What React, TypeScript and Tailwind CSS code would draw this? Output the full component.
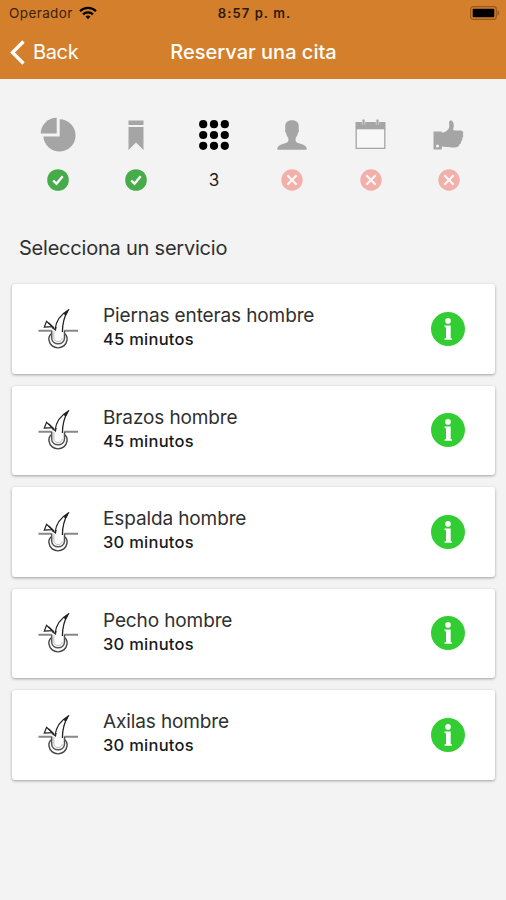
import React from 'react';

type StepStatus = 'done' | 'current' | 'pending';

interface Step {
  id: string;
  icon: React.ReactNode;
  status: StepStatus;
}

interface Service {
  name: string;
  minutes: number;
}

const PieIcon = () => (
  <svg width="36" height="36" viewBox="0 0 36 36" fill="#a5a5a5">
    <path d="M19.700 2.300a16.100 16.100 0 1 1-16.300 17.200h16.300z" />
    <path d="M16.700.8v15.800H.7A16 16 0 0 1 16.700.8z" />
  </svg>
);

const BookmarkIcon = () => (
  <svg width="16" height="30" viewBox="0 0 16 30" fill="#a5a5a5">
    <path d="M.5.5h15v4.500h-15zM.5 7h15v23L8 22.500.5 30z" />
  </svg>
);

const GridIcon = () => (
  <svg width="30" height="30" viewBox="0 0 30 30" fill="#000">
    {[4.2, 15, 25.8].map(y => [4.2, 15, 25.8].map(x => (
      <circle key={`${x}-${y}`} cx={x} cy={y} r="4.1" />
    )))}
  </svg>
);

const PersonIcon = () => (
  <svg width="30" height="30" viewBox="0 0 30 30" fill="#a5a5a5">
    <path d="M15 .2c4.400 0 7 2.300 6.800 6.500 0 1.100-.2 2-.2 2.700.7.300.5 2.500-.7 3.800-.5 2.200-1.300 3.700-2.300 4.700v2.800c.8 2.300 4.500 2.700 7.200 3.900 2.800 1.200 3.900 2.400 4 5.200H.2c.1-2.800 1.200-4 4-5.200 2.700-1.200 6.400-1.600 7.200-3.900v-2.800c-1-1-1.800-2.500-2.300-4.700C7.900 11.900 7.700 9.700 8.400 9.400c0-.7-.2-1.600-.2-2.700C8 2.500 10.600.2 15 .2z" />
  </svg>
);

const CalendarIcon = () => (
  <svg width="31" height="31" viewBox="0 0 31 31">
    <path d="M1.200 10v19.300h28.600V10" fill="#f7f7f7" stroke="#a5a5a5" strokeWidth="1.300" />
    <path d="M.5 3h30v7.300H.5z" fill="#a5a5a5" />
    <path d="M8.500.8v5M22.500.8v5" stroke="#dedede" strokeWidth="3.400" />
    <path d="M8.500 .5v6M22.500 .5v6" stroke="#a5a5a5" strokeWidth="1.900" />
  </svg>
);

const ThumbIcon = () => (
  <svg width="31" height="30" viewBox="0 0 31 30">
    <path
      d="M.5 11.500h8.300v1.300c4-.4 7.300-3.400 7.500-6.300 0-2.300-.6-5.500 1-6 2.500-.5 3.600 2.500 3.500 5.300-.1 2.100-.9 3.600-.5 4.200 2.300 1 7.500-.1 9.200 1.200 1.200 1 .8 2.500.2 3.100 1 1.200.7 2.900-.5 3.700.5 1.400 0 2.700-1.200 3.400.2 1.500-.5 2.700-1.800 3.200-.3 1.800-1.300 2.500-3 2.700-3.900.6-9.400 0-14.400-.7v3H.5z"
      fill="#a5a5a5"
    />
    <circle cx="4.500" cy="26" r="1.600" fill="#f3f3f3" />
  </svg>
);

const DoneBadge = () => (
  <svg width="22" height="22" viewBox="0 0 22 22">
    <circle cx="11" cy="11" r="10.800" fill="#45ac49" />
    <path d="M6.200 11.500l3.300 3.200 6.200-7.400" fill="none" stroke="#fff" strokeWidth="2.400" />
  </svg>
);

const PendingBadge = () => (
  <svg width="22" height="22" viewBox="0 0 22 22">
    <circle cx="11" cy="11" r="10.700" fill="#f2b0ab" />
    <path d="M6.300 6.300l9.400 9.400M15.700 6.300l-9.400 9.400" stroke="#faf6f6" strokeWidth="2.200" />
  </svg>
);

const FollicleIcon = () => (
  <svg width="40" height="40" viewBox="0 0 40 40" fill="none" stroke="#222">
    {/* skin line */}
    <path d="M.5 21.800h13M26.500 21.800h13.500" stroke="#888" strokeWidth="1.900" />
    {/* bulb */}
    <path d="M13.500 24.500c-2.100 1.700-2.900 4-2.500 6.600 1.500 10.300 16.500 10.300 18 0 .4-2.600-.4-4.900-2.500-6.600" stroke="#444" strokeWidth="1.400" />
    <path d="M13.700 21.500v7.800c.4 7.300 12.400 7.300 12.800 0v-7.800" stroke="#555" strokeWidth="1.500" />
    <path d="M15.900 22v7c.3 4.700 8.100 4.700 8.400 0" stroke="#aaa" strokeWidth=".8" />
    {/* hair */}
    <path d="M17 20.500C18 12.500 23 5.300 30 1.300c-3.600 6-5.600 13-5.600 21.700" strokeWidth="1.300" />
    <path d="M30.300.8l-4.200 4.300 2 .5z" fill="#222" />
    <path d="M8.600 12.300l-2.300 5.700 7.800-.4z" strokeWidth="1.200" />
    <path d="M10.500 13.700l5.500 5.300M14 18.500l3.500 2.500.6-3" strokeWidth="1.200" />
  </svg>
);

const InfoIcon = () => (
  <svg width="34" height="34" viewBox="0 0 34 34">
    <circle cx="17" cy="17" r="17" fill="#32cd32" />
    <g fill="#fff">
      <circle cx="17" cy="8.900" r="2.800" />
      <path d="M13.500 13.500h6.200v12.500l1.300.6v1.200h-7.500v-1.200l1.500-.6V15.400l-1.500-.6z" />
    </g>
  </svg>
);

const steps: Step[] = [
  { id: 'zone', icon: <PieIcon />, status: 'done' },
  { id: 'category', icon: <BookmarkIcon />, status: 'done' },
  { id: 'service', icon: <GridIcon />, status: 'current' },
  { id: 'staff', icon: <PersonIcon />, status: 'pending' },
  { id: 'date', icon: <CalendarIcon />, status: 'pending' },
  { id: 'confirm', icon: <ThumbIcon />, status: 'pending' },
];

const services: Service[] = [
  { name: 'Piernas enteras hombre', minutes: 45 },
  { name: 'Brazos hombre', minutes: 45 },
  { name: 'Espalda hombre', minutes: 30 },
  { name: 'Pecho hombre', minutes: 30 },
  { name: 'Axilas hombre', minutes: 30 },
];

const StatusBar = () => (
  <div className="grid h-[26px] grid-cols-3 items-center pl-[9px] pr-[6px] text-[13px] text-[#3a220c]">
    <div className="flex items-center gap-1.5">
      <span className="text-[13.5px] tracking-[0.4px]">Operador</span>
      <svg width="18" height="14" viewBox="0 0 18 14" fill="none" stroke="#000" strokeWidth="2.200">
        <path d="M1 5.200a11.500 11.500 0 0 1 16 0M4 8.400a7.200 7.200 0 0 1 10 0" />
        <path d="M9 13.300l-2.500-2.700a3.700 3.700 0 0 1 5 0z" fill="#000" stroke="none" />
      </svg>
    </div>
    <span className="whitespace-nowrap pt-px text-center font-semibold tracking-[1.1px] text-[#2c1a08]">8:57 p. m.</span>
    <svg className="justify-self-end" width="30" height="14" viewBox="0 0 30 14">
      <rect x=".7" y=".7" width="25.600" height="12.600" rx="2.500" fill="none" stroke="#94591f" strokeWidth="1.200" />
      <rect x="2.700" y="2.700" width="21.600" height="8.600" rx=".8" fill="#000" />
      <path d="M27.500 4.300c2.200.8 2.200 4.600 0 5.400z" fill="#94591f" />
    </svg>
  </div>
);

const NavBar = () => (
  <div className="grid h-[52px] grid-cols-[1fr_auto_1fr] items-center pl-[10px] text-[20px] text-white">
    <button className="flex items-center gap-2">
      <svg width="15" height="25" viewBox="0 0 15 25" fill="none" stroke="#fff" strokeWidth="3.400">
        <path d="M13.500 1.500l-11 11 11 11" />
      </svg>
      <span className="tracking-[-0.35px]">Back</span>
    </button>
    <h1 className="pr-[9px] font-medium">Reservar una cita</h1>
  </div>
);

const StepItem = ({ step, number }: { step: Step; number: number }) => (
  <div className="flex flex-col items-center gap-[9px]">
    <div className="flex h-9 items-center">{step.icon}</div>
    <div className="flex h-[36px] items-center text-[17px] text-[#222]">
      {step.status === 'done' && <DoneBadge />}
      {step.status === 'pending' && <PendingBadge />}
      {step.status === 'current' && <span className="pt-[3px]">{number}</span>}
    </div>
  </div>
);

const ServiceCard = ({ service }: { service: Service }) => (
  <li className="flex h-[89.500px] items-center rounded-[3px] bg-white pl-[26px] pr-[30px] shadow-[0_1px_3px_rgba(0,0,0,0.35)]">
    <FollicleIcon />
    <div className="flex-1 pb-[2px] pl-[25px]">
      <div className="text-[19px] leading-6 tracking-[-0.12px] text-[#303030]">{service.name}</div>
      <div className="-mt-px text-[16.5px] font-medium leading-6 tracking-[0.25px] text-[#1a1a1a]">{service.minutes} minutos</div>
    </div>
    <button aria-label="Info">
      <InfoIcon />
    </button>
  </li>
);

export default function App() {
  return (
    <div className="min-h-[900px] w-[506px] bg-[#f3f3f3] font-['Inter','Liberation_Sans',sans-serif]">
      <header className="h-[78.500px] bg-[#d47f2c]">
        <StatusBar />
        <NavBar />
      </header>

      <div className="grid grid-cols-6 pl-[18.500px] pr-[18px] pt-[38px]">
        {steps.map((step, index) => (
          <StepItem key={step.id} step={step} number={index + 1} />
        ))}
      </div>

      <h2 className="pl-[19px] pt-[36.500px] text-[20px] leading-7 tracking-[-0.22px] text-[#303030]">Selecciona un servicio</h2>

      <ul className="mx-3 mt-[22px] flex w-[483px] flex-col gap-3">
        {services.map(service => (
          <ServiceCard key={service.name} service={service} />
        ))}
      </ul>
    </div>
  );
}
